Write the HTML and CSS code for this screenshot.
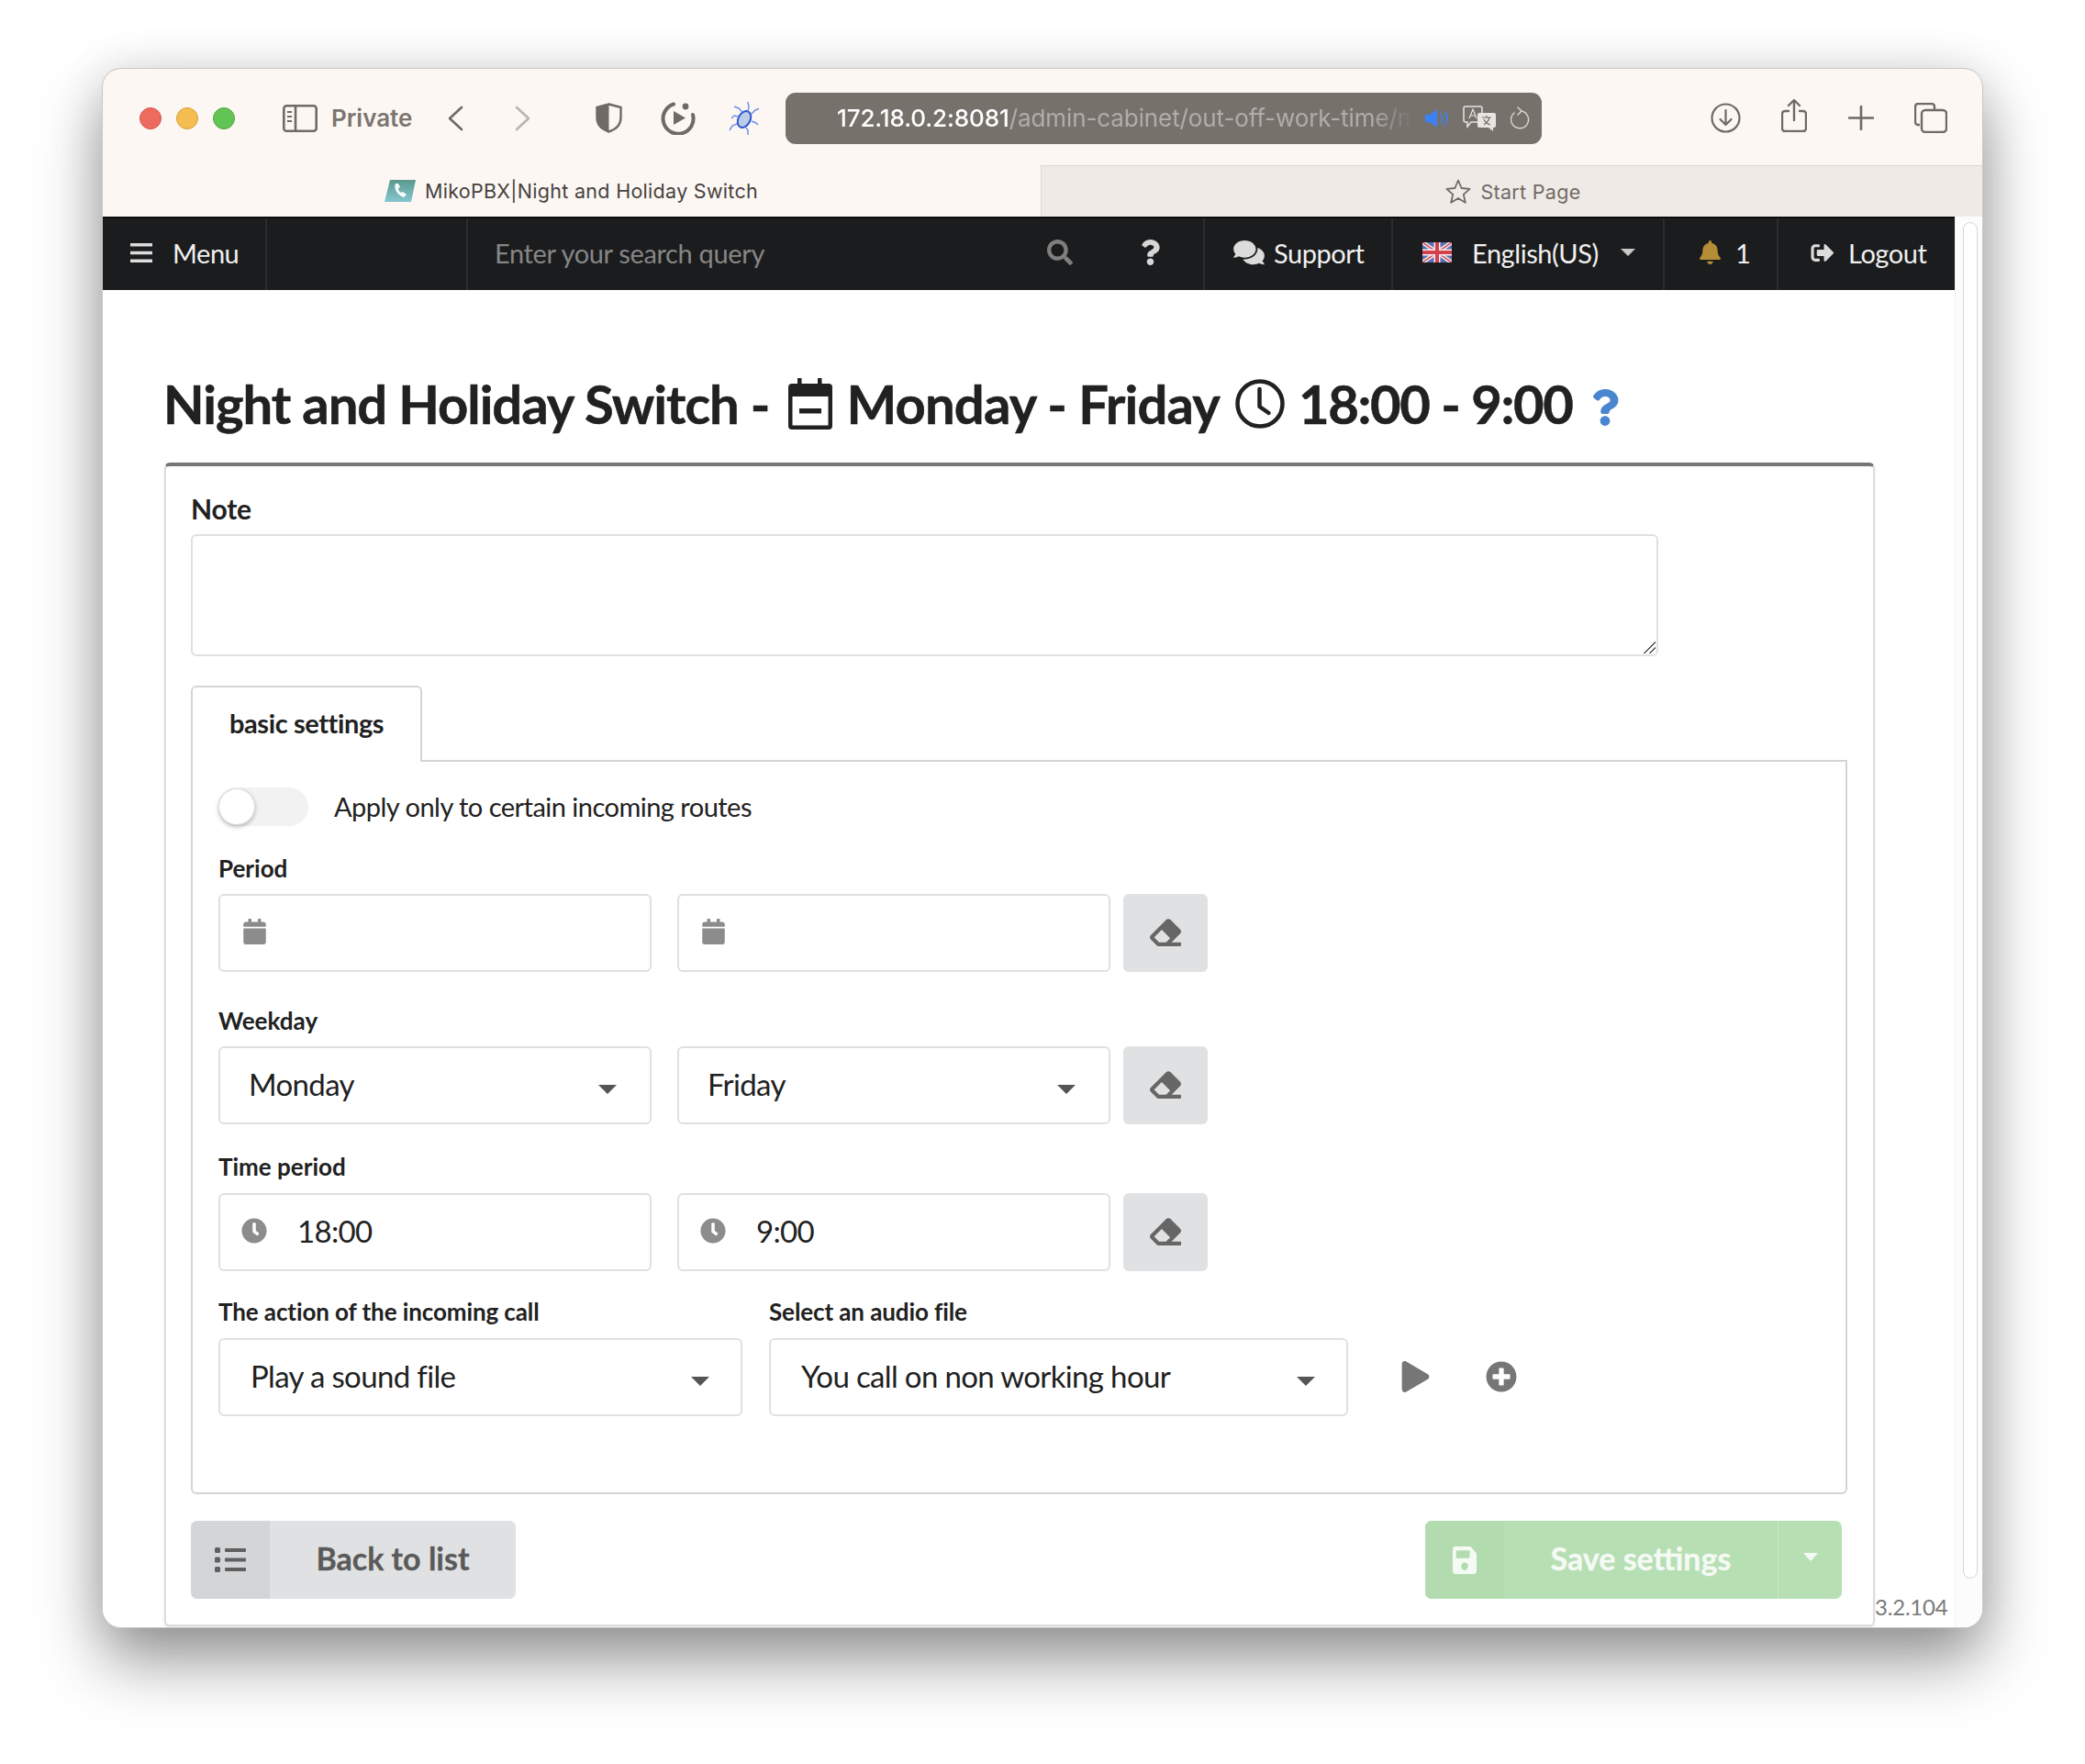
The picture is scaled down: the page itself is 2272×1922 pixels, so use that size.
FILE: index.html
```html
<!DOCTYPE html>
<html lang="en">
<head>
    <meta charset="UTF-8">
    <title>MikoPBX|Night and Holiday Switch</title>
    <link rel="stylesheet" href="styles.css">
</head>
<body>
    <!-- shared icons -->
    <svg class="sprite" xmlns="http://www.w3.org/2000/svg">
        <symbol id="i-eraser" viewBox="0 0 512 512"><path d="M497.941 273.941c18.745-18.745 18.745-49.137 0-67.882l-160-160c-18.745-18.745-49.137-18.745-67.882 0l-256 256c-18.745 18.745-18.745 49.137 0 67.882l96 96A48.004 48.004 0 0 0 144 480h356c6.627 0 12-5.373 12-12v-40c0-6.627-5.373-12-12-12H355.883l142.058-142.059zm-302.627-62.627l137.373 137.373L265.373 416H150.628l-80-80 124.686-124.686z"/></symbol>
        <symbol id="i-calendar" viewBox="0 0 448 512"><path d="M12 192h424c6.6 0 12 5.4 12 12v260c0 26.5-21.5 48-48 48H48c-26.5 0-48-21.5-48-48V204c0-6.6 5.4-12 12-12zm436-44v-36c0-26.5-21.5-48-48-48h-48V12c0-6.6-5.4-12-12-12h-40c-6.6 0-12 5.4-12 12v52H160V12c0-6.6-5.4-12-12-12h-40c-6.6 0-12 5.4-12 12v52H48C21.5 64 0 85.5 0 112v36c0 6.6 5.4 12 12 12h424c6.6 0 12-5.4 12-12z"/></symbol>
        <symbol id="i-clock" viewBox="0 0 512 512"><path d="M256,8C119,8,8,119,8,256S119,504,256,504,504,393,504,256,393,8,256,8Zm92.49,313h0l-20,25a16,16,0,0,1-22.49,2.5h0l-67-49.72a40,40,0,0,1-15-31.23V112a16,16,0,0,1,16-16h32a16,16,0,0,1,16,16V256l58,42.5A16,16,0,0,1,348.49,321Z"/></symbol>
        <symbol id="i-question" viewBox="0 0 384 512"><path d="M202.021 0C122.202 0 70.503 32.703 29.914 91.026c-7.363 10.58-5.093 25.086 5.178 32.874l43.138 32.709c10.373 7.865 25.132 6.026 33.253-4.148 25.049-31.381 43.63-49.449 82.757-49.449 30.764 0 68.816 19.799 68.816 49.631 0 22.552-18.617 34.134-48.993 51.164-35.423 19.86-82.299 44.576-82.299 106.405V320c0 13.255 10.745 24 24 24h72.471c13.255 0 24-10.745 24-24v-5.773c0-42.86 125.268-44.645 125.268-160.627C377.504 66.256 286.902 0 202.021 0zM192 373.459c-38.196 0-69.271 31.075-69.271 69.271 0 38.195 31.075 69.27 69.271 69.27s69.271-31.075 69.271-69.271-31.075-69.27-69.271-69.27z"/></symbol>
    </svg>

    <div class="window">
        <div class="toolbar">
            <div class="lights">
                <span class="light red"></span>
                <span class="light yellow"></span>
                <span class="light green"></span>
            </div>
            <svg class="tool sidebar-icon" viewBox="0 0 38 30" fill="none" stroke="currentColor" stroke-width="2.6">
                <rect x="1.3" y="1.3" width="35.4" height="27.4" rx="3"/>
                <path d="M14 1.3v27.4"/>
                <path d="M5 8h5M5 13h5M5 18h5" stroke-width="2"/>
            </svg>
            <span class="private">Private</span>
            <svg class="tool nav-back" viewBox="0 0 17 28" fill="none" stroke="currentColor" stroke-width="2.6" stroke-linecap="round" stroke-linejoin="round"><path d="M15 2 2 14l13 12"/></svg>
            <svg class="tool nav-forward" viewBox="0 0 17 28" fill="none" stroke="currentColor" stroke-width="2.6" stroke-linecap="round" stroke-linejoin="round"><path d="m2 2 13 12L2 26"/></svg>
            <svg class="tool shield" viewBox="0 0 29 33">
                <path d="M14.5 1.5 27.5 5v11c0 8-5.5 13-13 15.500C7 29 1.500 24 1.500 16V5z" fill="none" stroke="currentColor" stroke-width="2.400"/>
                <path d="M14.500 1.500 1.500 5v11c0 8 5.500 13 13 15.500z" fill="currentColor"/>
            </svg>
            <svg class="tool replay" viewBox="0 0 38 37" fill="none" stroke="currentColor">
                <path d="M14 3.500A16.500 16.500 0 1 0 35 15" stroke-width="4" stroke-linecap="round"/>
                <circle cx="27" cy="6" r="3.400" fill="currentColor" stroke="none"/>
                <path d="M14 11v15l13-7.500z" fill="currentColor" stroke="none"/>
            </svg>
            <svg class="tool bug" viewBox="0 0 33 36" fill="none" stroke="#6f93e6" stroke-width="1.500">
                <ellipse cx="17" cy="19" rx="6.500" ry="9.500" fill="#bccbe6" stroke="#2f58d0" stroke-width="2" transform="rotate(28 17 19)"/>
                <path d="M21 10l1-4-1-6M15 11 11 7 6 5M25 13l4-4 5-2M11 16l-5-1-3 3M25 21l5 2 2 2M9 24l-5 2-3 5M19 28l2 3 0 5"/>
            </svg>
            <div class="address">
                <span class="url"><span class="host">172.18.0.2:8081</span>/admin-cabinet/out-off-work-time/m</span>
                <svg class="speaker" viewBox="0 0 26 20">
                    <path d="M0 6h5l8-6v20l-8-6H0z" fill="#3b82f6"/>
                    <path d="M17 5c2 3 2 7 0 10M21 2c4 5 4 11 0 16" fill="none" stroke="#3b82f6" stroke-width="1.600"/>
                </svg>
                <svg class="translate" viewBox="0 0 37 28" fill="none" stroke="#e8e4e0" stroke-width="1.500">
                    <path d="M3 1h16a2 2 0 0 1 2 2v13a2 2 0 0 1-2 2H9l-4 5v-5H3a2 2 0 0 1-2-2V3a2 2 0 0 1 2-2z"/>
                    <path d="M7 14l4-10 4 10M8.500 11h5" stroke-width="1.200"/>
                    <path d="M18 8h16a2 2 0 0 1 2 2v12a2 2 0 0 1-2 2h-1v4l-5-4h-10a2 2 0 0 1-2-2V10a2 2 0 0 1 2-2z" fill="#e8e4e0" stroke="none"/>
                    <path d="M21 13h10M26 11v2M23 21c3-2 5-4 6-8M23 15c1 3 4 5 7 6" stroke="#77716c" stroke-width="1.200"/>
                </svg>
                <svg class="reload" viewBox="0 0 21 25" fill="none" stroke="#d8d4d0" stroke-width="1.500" stroke-linecap="round">
                    <path d="M12 5a9.500 9.500 0 1 1-8 2"/>
                    <path d="M8 1l4 4-4 4"/>
                </svg>
            </div>
            <svg class="tool download" viewBox="0 0 33 33" fill="none" stroke="currentColor" stroke-width="2.200" stroke-linecap="round" stroke-linejoin="round">
                <circle cx="16.500" cy="16.500" r="15"/>
                <path d="M16.500 8v16M10.500 18l6 6 6-6"/>
            </svg>
            <svg class="tool share" viewBox="0 0 28 36" fill="none" stroke="currentColor" stroke-width="2.400" stroke-linecap="round" stroke-linejoin="round">
                <path d="M8 13H4a3 3 0 0 0-3 3v16a3 3 0 0 0 3 3h20a3 3 0 0 0 3-3V16a3 3 0 0 0-3-3h-4"/>
                <path d="M14 23V2M8 7l6-6 6 6"/>
            </svg>
            <svg class="tool plus" viewBox="0 0 28 27" fill="none" stroke="currentColor" stroke-width="2.600" stroke-linecap="round"><path d="M14 1v25M1 13.500h26"/></svg>
            <svg class="tool tabs-icon" viewBox="0 0 36 33" fill="none" stroke="currentColor" stroke-width="2.400">
                <path d="M6 24H4a3 3 0 0 1-3-3V4a3 3 0 0 1 3-3h15a3 3 0 0 1 3 3v3"/>
                <rect x="8" y="8" width="27" height="24" rx="4"/>
            </svg>
        </div>

        <div class="tabstrip">
            <div class="browser-tab active">
                <svg class="favicon" viewBox="0 0 34 24">
                    <defs>
                        <linearGradient id="favfill" x1="0" y1="0" x2="0" y2="1">
                            <stop offset="0" stop-color="#5a9a8c"/>
                            <stop offset="1" stop-color="#86c6d2"/>
                        </linearGradient>
                    </defs>
                    <path d="M6 0h28l-5 24H0z" fill="url(#favfill)"/>
                    <path d="M12 4c-2 5 1 12 9 15l3-3-4-3-2 1c-2-1-3-3-3-5l2-1-2-4z" fill="#fff"/>
                </svg>
                MikoPBX|Night and Holiday Switch
            </div>
            <div class="browser-tab">
                <svg class="star" viewBox="0 0 28 27" fill="none" stroke="currentColor" stroke-width="1.800" stroke-linejoin="round"><path d="M14 1.500l3.600 8.500 9 .8-6.800 6 2 9-7.800-4.800-7.800 4.800 2-9-6.800-6 9-.8z"/></svg>
                Start Page
            </div>
        </div>

        <div class="page">
            <div class="main">
                <nav class="topnav">
                    <div class="nav-item menu-item">
                        <svg class="nav-icon" width="24" height="21" viewBox="0 0 24 21"><path d="M0 0h24v3.600H0zM0 8.700h24v3.600H0zM0 17.400h24V21H0z"/></svg>
                        Menu
                    </div>
                    <div class="nav-item blank-item"></div>
                    <div class="nav-search">
                        <span class="placeholder">Enter your search query</span>
                        <svg class="search-icon" viewBox="0 0 512 512"><path d="M505 442.7L405.3 343c-4.500-4.500-10.600-7-17-7H372c27.600-35.300 44-79.700 44-128C416 93.100 322.900 0 208 0S0 93.100 0 208s93.100 208 208 208c48.300 0 92.700-16.400 128-44v16.300c0 6.400 2.500 12.500 7 17l99.700 99.700c9.400 9.400 24.600 9.400 33.900 0l28.300-28.300c9.400-9.400 9.400-24.600.100-34zM208 336c-70.700 0-128-57.200-128-128 0-70.700 57.200-128 128-128 70.700 0 128 57.200 128 128 0 70.700-57.200 128-128 128z"/></svg>
                        <svg class="help-icon"><use href="#i-question"/></svg>
                    </div>
                    <div class="nav-item support-item">
                        <svg class="nav-icon" width="34" height="30" viewBox="0 0 576 512"><path d="M416 192c0-88.400-93.100-160-208-160S0 103.600 0 192c0 34.300 14.100 65.900 38 92-13.400 30.200-35.500 54.200-35.800 54.500-2.200 2.300-2.800 5.700-1.500 8.700S4.800 352 8 352c36.600 0 66.900-12.300 88.700-25 32.200 15.700 70.300 25 111.300 25 114.900 0 208-71.600 208-160zm122 220c23.900-26 38-57.700 38-92 0-66.900-53.500-124.200-129.300-148.100.9 6.600 1.300 13.300 1.300 20.100 0 105.900-107.700 192-240 192-10.800 0-21.300-.8-31.700-1.900C207.800 439.600 281.800 480 368 480c41 0 79.100-9.200 111.300-25 21.800 12.700 52.100 25 88.700 25 3.200 0 6.100-1.900 7.300-4.800 1.300-2.900.7-6.300-1.500-8.700-.3-.3-22.400-24.200-35.800-54.500z"/></svg>
                        Support
                    </div>
                    <div class="nav-item lang-item">
                        <svg class="flag" viewBox="0 0 32 22">
                            <rect width="32" height="22" fill="#5a6cb0"/>
                            <path d="M0 0l32 22M32 0 0 22" stroke="#f2e9ec" stroke-width="4.500"/>
                            <path d="M0 0l32 22M32 0 0 22" stroke="#d0525e" stroke-width="1.500"/>
                            <path d="M16 0v22M0 11h32" stroke="#f5eef0" stroke-width="7"/>
                            <path d="M16 0v22M0 11h32" stroke="#d4404c" stroke-width="4"/>
                        </svg>
                        English(US)
                        <span class="nav-caret"></span>
                    </div>
                    <div class="nav-item bell-item">
                        <svg class="bell" viewBox="0 0 448 512"><path d="M224 512c35.320 0 63.970-28.650 63.970-64H160.030c0 35.350 28.650 64 63.970 64zm215.390-149.710c-19.320-20.760-55.470-51.990-55.470-154.290 0-77.700-54.480-139.900-127.940-155.160V32c0-17.670-14.320-32-31.980-32s-31.980 14.330-31.980 32v20.840C118.560 68.100 64.080 130.300 64.080 208c0 102.300-36.150 133.530-55.470 154.290-6 6.450-8.660 14.160-8.610 21.710.11 16.400 12.980 32 32.100 32h383.800c19.120 0 32-15.600 32.100-32 .05-7.550-2.610-15.270-8.610-21.710z"/></svg>
                        1
                    </div>
                    <div class="nav-item logout-item">
                        <svg class="nav-icon" width="28" height="25" viewBox="0 0 512 512"><path d="M497 273L329 441c-15 15-41 4.500-41-17v-96H152c-13.300 0-24-10.700-24-24v-96c0-13.300 10.700-24 24-24h136V88c0-21.400 25.900-32 41-17l168 168c9.300 9.400 9.300 24.600 0 34zM192 436v-40c0-6.600-5.400-12-12-12H96c-17.700 0-32-14.300-32-32V160c0-17.700 14.300-32 32-32h84c6.600 0 12-5.400 12-12V76c0-6.600-5.400-12-12-12H96c-53 0-96 43-96 96v192c0 53 43 96 96 96h84c6.600 0 12-5.400 12-12z"/></svg>
                        Logout
                    </div>
                </nav>

                <div class="content">
                    <h1 class="title">
                        <span>Night and Holiday Switch -</span>
                        <svg class="title-calendar" viewBox="0 0 48 56" fill="currentColor">
                            <path d="M10 0h4.500v7H10zM32 0h4.500v7H32z"/>
                            <path fill-rule="evenodd" d="M4 6h40a4 4 0 0 1 4 4v42a4 4 0 0 1-4 4H4a4 4 0 0 1-4-4V10a4 4 0 0 1 4-4zm.500 14v31.500h39V20z"/>
                            <path d="M12 33h24v5.500H12z"/>
                        </svg>
                        <span class="title-days">Monday - Friday</span>
                        <svg class="title-clock" viewBox="0 0 54 54" fill="none" stroke="currentColor" stroke-width="4.500" stroke-linecap="round" stroke-linejoin="round">
                            <circle cx="27" cy="27" r="24.500"/>
                            <path d="M26.500 11v19l10 7"/>
                        </svg>
                        <span class="title-hours">18:00 - 9:00</span>
                        <svg class="title-help"><use href="#i-question"/></svg>
                    </h1>

                    <div class="segment-row">
                        <form class="segment">
                            <label class="note-label">Note</label>
                            <div class="note"><span class="grip"></span></div>

                            <div class="form-tab">basic settings</div>
                            <div class="tab-body">
                                <div class="toggle-row">
                                    <span class="toggle"><span class="knob"></span></span>
                                    <span class="toggle-text">Apply only to certain incoming routes</span>
                                </div>

                                <div class="field field-period">
                                    <label>Period</label>
                                    <div class="inputs">
                                        <div class="input"><svg class="input-icon cal"><use href="#i-calendar"/></svg></div>
                                        <div class="input"><svg class="input-icon cal"><use href="#i-calendar"/></svg></div>
                                        <button type="button" class="clear"><svg><use href="#i-eraser"/></svg></button>
                                    </div>
                                </div>

                                <div class="field field-weekday">
                                    <label>Weekday</label>
                                    <div class="inputs">
                                        <div class="input select">Monday<span class="caret"></span></div>
                                        <div class="input select">Friday<span class="caret"></span></div>
                                        <button type="button" class="clear"><svg><use href="#i-eraser"/></svg></button>
                                    </div>
                                </div>

                                <div class="field field-time">
                                    <label>Time period</label>
                                    <div class="inputs">
                                        <div class="input"><svg class="input-icon"><use href="#i-clock"/></svg>18:00</div>
                                        <div class="input"><svg class="input-icon"><use href="#i-clock"/></svg>9:00</div>
                                        <button type="button" class="clear"><svg><use href="#i-eraser"/></svg></button>
                                    </div>
                                </div>

                                <div class="action-row">
                                    <div class="action-col">
                                        <label>The action of the incoming call</label>
                                        <div class="input select wide-action">Play a sound file<span class="caret"></span></div>
                                    </div>
                                    <div class="action-col">
                                        <label>Select an audio file</label>
                                        <div class="audio-line">
                                            <div class="input select wide-audio">You call on non working hour<span class="caret"></span></div>
                                            <svg class="audio-play" viewBox="0 0 448 512"><path d="M424.400 214.700L72.400 6.600C43.800-10.300 0 6.100 0 47.900V464c0 37.500 40.700 60.100 72.400 41.300l352-208c31.400-18.500 31.500-64.100 0-82.600z"/></svg>
                                            <svg class="audio-add" viewBox="0 0 512 512"><path d="M256 8C119 8 8 119 8 256s111 248 248 248 248-111 248-248S393 8 256 8zm144 276c0 6.600-5.400 12-12 12h-92v92c0 6.600-5.400 12-12 12h-56c-6.600 0-12-5.400-12-12v-92h-92c-6.600 0-12-5.400-12-12v-56c0-6.600 5.400-12 12-12h92v-92c0-6.600 5.400-12 12-12h56c6.600 0 12 5.400 12 12v92h92c6.600 0 12 5.400 12 12v56z"/></svg>
                                        </div>
                                    </div>
                                </div>
                            </div>

                            <div class="form-buttons">
                                <button type="button" class="btn back-btn">
                                    <span class="btn-icon">
                                        <svg width="34" height="27" viewBox="0 0 34 27" fill="#5f5f5f">
                                            <rect width="6" height="6" y="0" rx="1.500"/><rect width="6" height="6" y="10.500" rx="1.500"/><rect width="6" height="6" y="21" rx="1.500"/>
                                            <rect x="11" y="1" width="23" height="4" rx="1"/><rect x="11" y="11.500" width="23" height="4" rx="1"/><rect x="11" y="22" width="23" height="4" rx="1"/>
                                        </svg>
                                    </span>
                                    <span class="btn-text">Back to list</span>
                                </button>
                                <button type="button" class="btn save-btn">
                                    <span class="btn-icon">
                                        <svg width="26" height="30" viewBox="0 32 448 448" fill="#f6faf5" preserveAspectRatio="none"><path d="M433.941 129.941l-83.882-83.882A48 48 0 0 0 316.118 32H48C21.490 32 0 53.490 0 80v352c0 26.510 21.490 48 48 48h352c26.510 0 48-21.490 48-48V163.882a48 48 0 0 0-14.059-33.941zM224 416c-35.346 0-64-28.654-64-64 0-35.346 28.654-64 64-64s64 28.654 64 64c0 35.346-28.654 64-64 64zm96-304.520V212c0 6.627-5.373 12-12 12H76c-6.627 0-12-5.373-12-12V108c0-6.627 5.373-12 12-12h228.520c3.183 0 6.235 1.264 8.485 3.515l3.480 3.480A11.996 11.996 0 0 1 320 111.480z"/></svg>
                                    </span>
                                    <span class="btn-text">Save settings</span>
                                    <span class="btn-drop"><span class="drop-caret"></span></span>
                                </button>
                            </div>
                        </form>
                        <div class="version">3.2.104</div>
                    </div>
                </div>
            </div>
            <div class="scroll-col"><div class="scroll-thumb"></div></div>
        </div>
    </div>
</body>
</html>
```

FILE: styles.css
```css
* {
    box-sizing: border-box;
}
html, body {
    margin: 0;
    padding: 0;
    background-color: #fff;
}
body {
    width: 2272px;
    height: 1922px;
    padding: 75px 112px 0;
    overflow: hidden;
    font-family: "Lato", "Liberation Sans", sans-serif;
    color: #212121;
}
.sprite {
    display: none;
}

/* browser window */
.window {
    width: 2048px;
    height: 1698px;
    display: flex;
    flex-direction: column;
    border-radius: 20px;
    overflow: hidden;
    background-color: #fcf7f3;
    box-shadow: 0 0 0 1px #c9c7c5, 0 36px 70px rgba(0, 0, 0, .42), 0 0 50px rgba(0, 0, 0, .1);
}
.toolbar {
    height: 105px;
    flex: none;
    display: flex;
    align-items: center;
    padding-top: 2px;
    color: #6f6a66;
}
.tool {
    flex: none;
}
.lights {
    display: flex;
    gap: 16px;
    margin-left: 40px;
}
.light {
    width: 24px;
    height: 24px;
    border-radius: 50%;
}
.red {
    background-color: #ee6a5f;
    border: 1px solid #d65549;
}
.yellow {
    background-color: #f5bd4f;
    border: 1px solid #d8a03a;
}
.green {
    background-color: #61c454;
    border: 1px solid #4eab43;
}
.sidebar-icon {
    width: 38px;
    height: 30px;
    margin-left: 52px;
}
.private {
    margin-left: 15px;
    font-family: "Inter", sans-serif;
    font-size: 26px;
    font-weight: 600;
    color: #7a7570;
    width: 88px;
    white-space: nowrap;
}
.nav-back {
    width: 17px;
    height: 28px;
    margin-left: 39px;
}
.nav-forward {
    width: 17px;
    height: 28px;
    margin-left: 56px;
    color: #b9b5b1;
}
.shield {
    width: 29px;
    height: 33px;
    margin-left: 71px;
}
.replay {
    width: 38px;
    height: 37px;
    margin-left: 42px;
}
.bug {
    width: 33px;
    height: 36px;
    margin-left: 36px;
}
.address {
    width: 824px;
    height: 56px;
    margin-left: 29px;
    padding-left: 56px;
    display: flex;
    align-items: center;
    background-color: #77716c;
    border-radius: 11px;
    font-family: "Inter", sans-serif;
    font-size: 26px;
    letter-spacing: -.1px;
    color: rgba(255, 255, 255, .42);
}
.url {
    width: 640px;
    flex: none;
    white-space: nowrap;
    -webkit-mask-image: linear-gradient(to right, #000 91%, transparent 98%);
    mask-image: linear-gradient(to right, #000 91%, transparent 98%);
}
.host {
    color: #fff;
    font-weight: 500;
}
.speaker {
    width: 26px;
    height: 20px;
    margin-left: 1px;
    flex: none;
}
.translate {
    width: 37px;
    height: 28px;
    margin-left: 15px;
    flex: none;
}
.reload {
    width: 21px;
    height: 25px;
    margin-left: 15px;
    flex: none;
}
.download {
    width: 33px;
    height: 33px;
    margin-left: 184px;
}
.share {
    width: 28px;
    height: 36px;
    margin-left: 44px;
    margin-top: -5px;
}
.plus {
    width: 28px;
    height: 27px;
    margin-left: 45px;
}
.tabs-icon {
    width: 36px;
    height: 33px;
    margin-left: 44px;
}

/* tabs of the browser */
.tabstrip {
    height: 56px;
    flex: none;
    display: flex;
    font-family: "Inter", sans-serif;
    font-size: 21.5px;
}
.browser-tab {
    width: 1026px;
    display: flex;
    align-items: center;
    justify-content: center;
    gap: 10px;
    padding-left: 3px;
    color: #6f6a66;
    background-color: #efeae6;
    border-left: 1px solid #dcd8d4;
    border-top: 1px solid #dcd8d4;
    letter-spacing: .3px;
}
.browser-tab.active {
    width: 1022px;
    padding-left: 0;
    padding-right: 1px;
    color: #46423f;
    background-color: #fcf7f3;
    border-left: none;
    border-top: none;
}
.favicon {
    width: 34px;
    height: 24px;
}
.star {
    width: 28px;
    height: 27px;
}

/* page inside the browser */
.page {
    flex: 1;
    min-height: 0;
    display: flex;
    background-color: #fff;
}
.main {
    width: 2018px;
    flex: none;
    display: flex;
    flex-direction: column;
    overflow: hidden;
}
.scroll-col {
    flex: 1;
    padding: 6px 5px 0 8px;
    background-color: #fcfcfc;
    border-left: 1px solid #f0f0f0;
}
.scroll-thumb {
    height: 1478px;
    border: 1px solid #d6d6d6;
    border-radius: 9px;
    background-color: #fff;
}

/* top menu */
.topnav {
    height: 80px;
    flex: none;
    display: flex;
    background-color: #1b1c1d;
    border-top: 2px solid #0c0c0d;
    color: #f0f0f0;
    font-size: 29px;
    letter-spacing: -.45px;
}
.nav-item {
    display: flex;
    align-items: center;
    padding-bottom: 4px;
    border-right: 2px solid #2b2c2d;
    white-space: nowrap;
}
.nav-icon {
    fill: #dcdcdc;
    flex: none;
}
.menu-item {
    width: 179px;
    padding-left: 30px;
    gap: 22px;
}
.blank-item {
    width: 219px;
}
.nav-search {
    width: 803px;
    display: flex;
    align-items: center;
    padding-left: 29px;
    padding-bottom: 4px;
    border-right: 2px solid #2b2c2d;
}
.placeholder {
    width: 602px;
    color: #868686;
    letter-spacing: -.35px;
}
.search-icon {
    width: 28px;
    height: 28px;
    fill: #7f7f7f;
}
.help-icon {
    width: 21px;
    height: 28px;
    margin-left: 74px;
    fill: #d6d6d6;
}
.support-item {
    width: 205px;
    padding-left: 31px;
    gap: 10px;
}
.lang-item {
    width: 296px;
    padding-left: 32px;
}
.flag {
    width: 32px;
    height: 22px;
    margin-right: 22px;
}
.nav-caret {
    width: 0;
    height: 0;
    margin-left: 24px;
    border-left: 8px solid transparent;
    border-right: 8px solid transparent;
    border-top: 8px solid #c8c8c8;
}
.bell-item {
    width: 124px;
    padding-left: 38px;
    gap: 16px;
}
.bell {
    width: 23px;
    height: 26px;
    fill: #b58d36;
}
.logout-item {
    flex: 1;
    padding-left: 34px;
    gap: 14px;
    border-right: none;
}

/* content */
.content {
    flex: 1;
    padding-left: 67px;
    padding-top: 94px;
}
.title {
    height: 62px;
    margin: 0 0 0 -1px;
    padding-bottom: 2px;
    display: flex;
    align-items: center;
    font-size: 58px;
    font-weight: 700;
    line-height: 58px;
    letter-spacing: -1.05px;
    white-space: nowrap;
    -webkit-text-stroke: .5px #212121;
}
.title-calendar {
    width: 48px;
    height: 56px;
    margin: 0 15px 0 21px;
    flex: none;
}
.title-days {
    letter-spacing: -.85px;
}
.title-clock {
    width: 54px;
    height: 54px;
    margin: 0 15px 0 17px;
    flex: none;
}
.title-hours {
    letter-spacing: -1.4px;
}
.title-help {
    width: 30px;
    height: 42px;
    margin-left: 21px;
    margin-top: 8px;
    fill: #4a86cf;
    flex: none;
}
.segment-row {
    display: flex;
    align-items: flex-end;
    margin-top: 32px;
}
.segment {
    width: 1864px;
    height: 1268px;
    flex: none;
    padding: 30px 26px 0 27px;
    background-color: #fff;
    border: 2px solid #dddddd;
    border-top: 4px solid #767676;
    border-radius: 6px;
    box-shadow: 0 2px 3px rgba(0, 0, 0, .1);
}
.version {
    margin-left: 0;
    margin-bottom: 7px;
    font-size: 24px;
    letter-spacing: -.2px;
    color: #7a7a7a;
}
label {
    display: block;
    height: 34px;
    font-size: 26px;
    font-weight: 700;
    line-height: 32px;
    white-space: nowrap;
}
.action-col label {
    letter-spacing: -.1px;
}
.note-label {
    font-size: 30px;
    letter-spacing: -.2px;
}
.note {
    width: 1599px;
    height: 133px;
    margin-top: 10px;
    position: relative;
    border: 2px solid #e0e0e0;
    border-radius: 6px;
}
.grip {
    position: absolute;
    right: 1px;
    bottom: 1px;
    width: 14px;
    height: 14px;
    background: linear-gradient(135deg, transparent 50%, #555 50%, #555 58%, transparent 58%, transparent 74%, #555 74%, #555 82%, transparent 82%);
}
.form-tab {
    width: 252px;
    height: 83px;
    margin-top: 32px;
    padding-left: 40px;
    position: relative;
    z-index: 1;
    background-color: #fff;
    border: 2px solid #d4d4d5;
    border-bottom: none;
    border-radius: 6px 6px 0 0;
    font-size: 29px;
    font-weight: 700;
    letter-spacing: -.4px;
    line-height: 78px;
}
.tab-body {
    width: 1805px;
    height: 800px;
    margin-top: -2px;
    padding: 28px 0 0 28px;
    border: 2px solid #d4d4d5;
    border-radius: 0 0 6px 6px;
}
.toggle-row {
    height: 42px;
    display: flex;
    align-items: center;
    font-size: 29px;
    letter-spacing: -.52px;
}
.toggle-text {
    margin-top: -2px;
}
.toggle {
    width: 98px;
    height: 42px;
    margin-right: 28px;
    display: block;
    background-color: #f2f2f2;
    border-radius: 21px;
}
.knob {
    width: 40px;
    height: 40px;
    margin-top: 1px;
    display: block;
    background-color: #fff;
    border-radius: 50%;
    box-shadow: 0 2px 4px rgba(34, 36, 38, .3), 0 0 0 1px rgba(34, 36, 38, .15) inset;
}
.field-period {
    margin-top: 30px;
}
.field-weekday {
    margin-top: 37px;
}
.field-time {
    margin-top: 30px;
}
.field label, .action-col label {
    margin-bottom: 10px;
}
.field-time label, .action-col label {
    margin-bottom: 11px;
}
.inputs {
    display: flex;
    gap: 28px;
}
.input {
    width: 472px;
    height: 85px;
    flex: none;
    display: flex;
    align-items: center;
    position: relative;
    padding-left: 31px;
    padding-bottom: 3px;
    background-color: #fff;
    border: 2px solid #e0e0e0;
    border-radius: 6px;
    font-size: 33px;
    letter-spacing: -.65px;
    white-space: nowrap;
}
.input-icon {
    width: 28px;
    height: 28px;
    margin-left: -8px;
    margin-right: 33px;
    fill: #8c8c8c;
    flex: none;
}
.input-icon.cal {
    width: 25px;
    height: 28px;
    margin-left: -6px;
}
.caret {
    position: absolute;
    right: 36px;
    top: 40px;
    width: 0;
    height: 0;
    border-left: 10px solid transparent;
    border-right: 10px solid transparent;
    border-top: 10px solid #555;
}
.clear {
    width: 92px;
    height: 85px;
    margin-left: -14px;
    padding: 0 0 2px;
    display: flex;
    align-items: center;
    justify-content: center;
    background-color: #e0e1e2;
    border: none;
    border-radius: 6px;
}
.clear svg {
    width: 34px;
    height: 34px;
    fill: #666;
}
.action-row {
    display: flex;
    gap: 29px;
    margin-top: 28px;
}
.wide-action {
    width: 571px;
    padding-left: 33px;
}
.wide-action .caret, .wide-audio .caret {
    right: 34px;
}
.wide-audio {
    width: 631px;
    padding-left: 33px;
}
.audio-line {
    display: flex;
    align-items: center;
}
.audio-play {
    width: 31px;
    height: 34px;
    margin-left: 58px;
    margin-bottom: 2px;
    fill: #767676;
}
.audio-add {
    width: 34px;
    height: 34px;
    margin-left: 61px;
    margin-bottom: 2px;
    fill: #767676;
}

/* bottom buttons */
.form-buttons {
    width: 1799px;
    display: flex;
    justify-content: space-between;
    margin-top: 29px;
}
.btn {
    height: 85px;
    padding: 0;
    display: flex;
    align-items: stretch;
    border: none;
    border-radius: 7px;
    overflow: hidden;
    font-family: "Lato", sans-serif;
    font-size: 34px;
    font-weight: 700;
    -webkit-text-stroke: .3px currentColor;
}
.btn-icon {
    display: flex;
    align-items: center;
    justify-content: center;
    flex: none;
}
.btn-text {
    display: flex;
    align-items: center;
    justify-content: center;
    padding-bottom: 5px;
}
.back-btn {
    width: 354px;
    color: #5a5a5a;
    background-color: #e0e1e2;
}
.back-btn .btn-icon {
    width: 86px;
    background-color: #d4d5d7;
}
.back-btn .btn-text {
    flex: 1;
}
.save-btn {
    width: 454px;
    color: #f6faf5;
    background-color: #b7dfb4;
}
.save-btn .btn-icon {
    width: 86px;
    background-color: #b2dcaf;
}
.save-btn .btn-text {
    width: 298px;
}
.btn-drop {
    flex: 1;
    display: flex;
    align-items: center;
    justify-content: center;
    border-left: 1px solid #c9e8c6;
}
.drop-caret {
    width: 0;
    height: 0;
    margin-bottom: 6px;
    border-left: 8px solid transparent;
    border-right: 8px solid transparent;
    border-top: 9px solid #f6faf5;
}
```
